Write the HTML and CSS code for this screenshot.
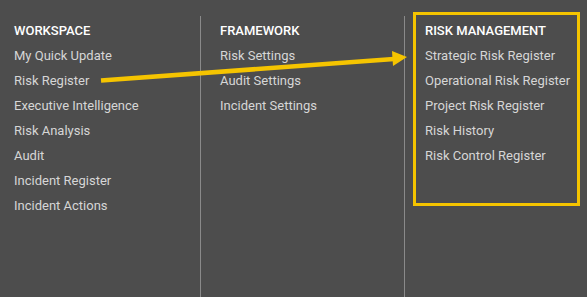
FILE: index.html
```html
<!DOCTYPE html>
<html lang="en">
<head>
  <meta charset="UTF-8" />
  <title>Menu</title>
  <link rel="stylesheet" href="styles.css">
</head>
<body>
  <div class="menu">
    <div class="column first">
      <h3>WORKSPACE</h3>
      <a href="#">My Quick Update</a>
      <a href="#">Risk Register</a>
      <a href="#">Executive Intelligence</a>
      <a href="#">Risk Analysis</a>
      <a href="#">Audit</a>
      <a href="#">Incident Register</a>
      <a href="#">Incident Actions</a>
    </div>

    <div class="column second">
      <h3>FRAMEWORK</h3>
      <a href="#">Risk Settings</a>
      <a href="#">Audit Settings</a>
      <a href="#">Incident Settings</a>
    </div>

    <div class="column third">
      <div class="highlight">
        <h3>RISK MANAGEMENT</h3>
        <a href="#">Strategic Risk Register</a>
        <a href="#">Operational Risk Register</a>
        <a href="#">Project Risk Register</a>
        <a href="#">Risk History</a>
        <a href="#">Risk Control Register</a>
      </div>
    </div>

    <!-- annotation arrow -->
    <svg class="arrow" width="587" height="297" viewBox="0 0 587 297">
      <line x1="101" y1="80.5" x2="394" y2="59" stroke="#f5c400" stroke-width="4.5" />
      <polygon points="392,51 407,57 393,66" fill="#f5c400" />
    </svg>
  </div>
</body>
</html>
```

FILE: styles.css
```css
body {
  margin: 0;
  padding: 0;
  background: #4d4d4d;
  font-family: Roboto, 'Liberation Sans', sans-serif;
}

.menu {
  position: relative;
  display: flex;
  height: 297px;
  padding-top: 16px;
  box-sizing: border-box;
}

.column {
  display: flex;
  flex-direction: column;
}

.column h3 {
  margin: 0;
  font-size: 13px;
  font-weight: 500;
  line-height: 25px;
  color: #ffffff;
}

.column a {
  font-size: 13px;
  line-height: 25px;
  color: #d6d6d6;
  text-decoration: none;
}

.first {
  width: 186px;
  padding-left: 14px;
  padding-top: 2px;
}

.second {
  width: 184px;
  padding-left: 19px;
  padding-top: 2px;
  border-left: 1px solid #8a8a8a;
}

.third {
  border-left: 1px solid #8a8a8a;
  padding-left: 8px;
}

.highlight {
  display: flex;
  flex-direction: column;
  width: 152px;
  height: 185px;
  margin-top: -4px;
  padding: 3px 0 0 9px;
  border: 3px solid #f5c400;
}

.arrow {
  position: absolute;
  top: 0;
  left: 0;
  pointer-events: none;
}
```
